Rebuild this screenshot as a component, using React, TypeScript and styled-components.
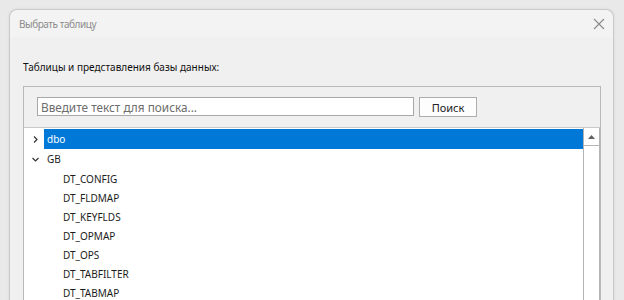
import { FC } from "react";
import styled, { createGlobalStyle } from "styled-components";

const GlobalStyle = createGlobalStyle`
  html, body {
    margin: 0;
    padding: 0;
    height: 100%;
    overflow: hidden;
    background: #e9e9e9;
    font-family: "Noto Sans", "Liberation Sans", sans-serif;
    font-size: 10px;
  }
`;

type Node = { name: string; expanded?: boolean; children?: string[] };

const tree: Node[] = [
  { name: "dbo" },
  {
    name: "GB",
    expanded: true,
    children: [
      "DT_CONFIG",
      "DT_FLDMAP",
      "DT_KEYFLDS",
      "DT_OPMAP",
      "DT_OPS",
      "DT_TABFILTER",
      "DT_TABMAP",
    ],
  },
];

const Chevron: FC<{ open?: boolean }> = ({ open }) => (
  <svg width="9" height="9" viewBox="0 0 9 9">
    {open ? (
      <path d="M1.5 3 L4.5 6 L7.5 3" fill="none" stroke="#333" strokeWidth="1.2" />
    ) : (
      <path d="M3 1.5 L6 4.5 L3 7.5" fill="none" stroke="#333" strokeWidth="1.2" />
    )}
  </svg>
);

const App: FC = () => {
  return (
    <>
      <GlobalStyle />
      <Screen>
        <Window>
          <TitleBar>
            <Title>Выбрать таблицу</Title>
            <CloseButton>
              <svg width="12" height="12" viewBox="0 0 12 12">
                <path d="M1 1 L11 11 M11 1 L1 11" stroke="#8a8a8a" strokeWidth="1.1" />
              </svg>
            </CloseButton>
          </TitleBar>
          <Body>
            <Label>Таблицы и представления базы данных:</Label>
            <Panel>
              <SearchRow>
                <SearchInput placeholder="Введите текст для поиска..." />
                <SearchButton>Поиск</SearchButton>
              </SearchRow>
              <ListArea>
                <List>
                  {tree.map((node, i) => (
                    <div key={node.name}>
                      <Row>
                        <Toggle>
                          <Chevron open={node.expanded} />
                        </Toggle>
                        <RowLabel selected={i === 0}>{node.name}</RowLabel>
                      </Row>
                      {node.expanded &&
                        node.children?.map((c) => (
                          <Row key={c}>
                            <Indent />
                            <RowLabel>{c}</RowLabel>
                          </Row>
                        ))}
                    </div>
                  ))}
                </List>
                <ScrollBar>
                  <ScrollArrow>
                    <svg width="7" height="4" viewBox="0 0 7 4">
                      <path d="M0 4 L3.5 0 L7 4 Z" fill="#606060" />
                    </svg>
                  </ScrollArrow>
                </ScrollBar>
              </ListArea>
            </Panel>
          </Body>
        </Window>
      </Screen>
    </>
  );
};

export default App;

const Screen = styled.div`
  box-sizing: border-box;
  height: 300px;
  padding: 9px 10px 0 9px;
`;

const Window = styled.div`
  box-sizing: border-box;
  width: 605px;
  height: 300px;
  background: #f0f0f0;
  border: 1px solid #cacaca;
  border-bottom: none;
  border-radius: 8px 8px 0 0;
  box-shadow: 0 0 3px rgba(0, 0, 0, 0.08);
  display: flex;
  flex-direction: column;
  overflow: hidden;
`;

const TitleBar = styled.div`
  flex-shrink: 0;
  height: 27px;
  display: flex;
  align-items: center;
  justify-content: space-between;
  padding: 0 7px 0 9px;
  background: #f3f3f3;
  border-radius: 8px 8px 0 0;
`;

const Title = styled.span`
  color: #8c8c8c;
  font-size: 10px;
  letter-spacing: -0.45px;
`;

const CloseButton = styled.div`
  width: 14px;
  height: 14px;
  display: flex;
  align-items: center;
  justify-content: center;
`;

const Body = styled.div`
  flex: 1;
  display: flex;
  flex-direction: column;
  padding: 0 12px 0 13px;
`;

const Label = styled.div`
  flex-shrink: 0;
  color: #111;
  font-size: 10px;
  margin-top: 22px;
  height: 17px;
  line-height: 17px;
  margin-bottom: 10px;
`;

const Panel = styled.div`
  flex: 1;
  border: 1px solid #b9b9b9;
  border-bottom: none;
  display: flex;
  flex-direction: column;
`;

const SearchRow = styled.div`
  flex-shrink: 0;
  display: flex;
  gap: 5px;
  padding: 10px 0 10px 13px;
`;

const SearchInput = styled.input`
  box-sizing: border-box;
  width: 377px;
  height: 19px;
  border: 1px solid #a8a8a8;
  background: #fff;
  padding: 0 3px;
  font-family: "Noto Sans", "Liberation Sans", sans-serif;
  font-size: 11.8px;
  outline: none;
  &::placeholder {
    color: #6d6d6d;
  }
`;

const SearchButton = styled.button`
  box-sizing: border-box;
  width: 58px;
  height: 20px;
  border: 1px solid #adadad;
  background: #fdfdfd;
  font-family: "Noto Sans", "Liberation Sans", sans-serif;
  font-size: 11px;
  color: #222;
  padding: 0;
`;

const ListArea = styled.div`
  flex: 1;
  display: flex;
  background: #fff;
  border-top: 1px solid #c8c8c8;
`;

const List = styled.div`
  flex: 1;
  padding-top: 1px;
`;

const Row = styled.div`
  height: 19px;
  display: flex;
  align-items: center;
  &:first-child {
    height: 20px;
  }
`;

const Toggle = styled.div`
  width: 18px;
  display: flex;
  justify-content: center;
  padding-left: 2px;
`;

const Indent = styled.div`
  width: 36px;
`;

const RowLabel = styled.div<{ selected?: boolean }>`
  flex: ${(p) => (p.selected ? 1 : "0 0 auto")};
  align-self: stretch;
  display: flex;
  align-items: center;
  padding-left: 3px;
  font-size: 10px;
  color: ${(p) => (p.selected ? "#fff" : "#1c1c1c")};
  background: ${(p) => (p.selected ? "#0078d7" : "transparent")};
`;

const ScrollBar = styled.div`
  width: 15px;
  border-left: 1px solid #b4b4b4;
  border-right: 1px solid #b4b4b4;
  background: #fff;
`;

const ScrollArrow = styled.div`
  height: 17px;
  border-bottom: 1px solid #b4b4b4;
  display: flex;
  align-items: center;
  justify-content: center;
`;
